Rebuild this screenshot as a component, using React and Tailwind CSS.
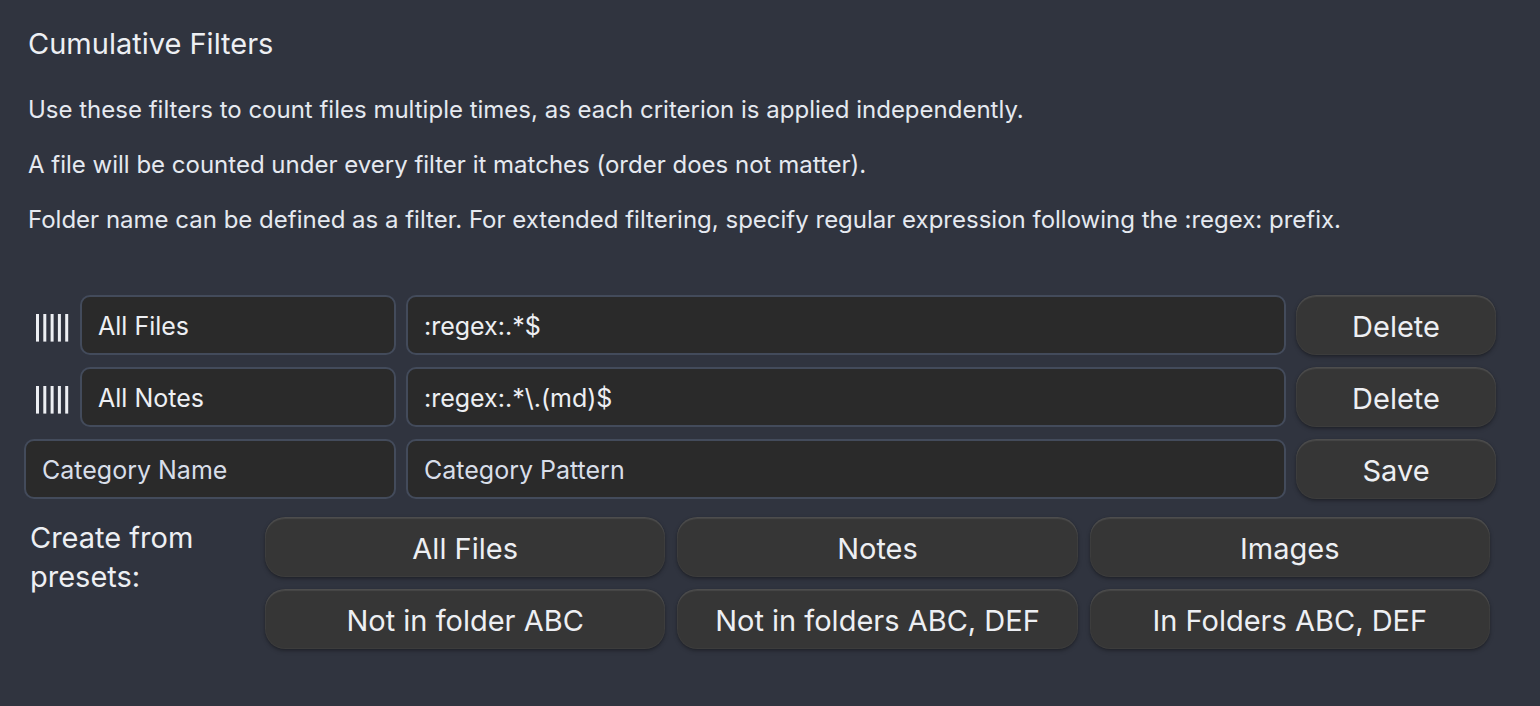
const filters = [
  { id: "all-files", name: "All Files", pattern: ":regex:.*$" },
  { id: "all-notes", name: "All Notes", pattern: ":regex:.*\\.(md)$" },
];

const presets = [
  "All Files",
  "Notes",
  "Images",
  "Not in folder ABC",
  "Not in folders ABC, DEF",
  "In Folders ABC, DEF",
];

function Button({ children, className = "" }) {
  return (
    <button
      type="button"
      className={`h-15 cursor-pointer rounded-[20px] bg-[#363636] px-4 pt-1 text-[29px] whitespace-nowrap text-[#edeff3] shadow-[inset_0_2px_1px_0_rgba(255,255,255,0.09),inset_0_0_0_1px_rgba(255,255,255,0.03),0_2px_4px_0_rgba(0,0,0,0.25),0_1px_2px_0_rgba(0,0,0,0.15)] ${className}`}
    >
      {children}
    </button>
  );
}

function TextField({ label, className = "", ...props }) {
  return (
    <input
      type="text"
      aria-label={label}
      className={`h-15 min-w-0 rounded-[10px] border-2 border-[#434b5b] bg-[#2a2a2a] px-4 pt-0.5 text-[25px] text-[#edeff3] outline-none placeholder:text-[#d8dee9] ${className}`}
      {...props}
    />
  );
}

function DragHandle() {
  return (
    <button type="button" aria-label="Reorder filter" className="w-14 shrink-0 cursor-grab pt-1.5 pl-2.5">
      <svg width="36" height="28" viewBox="0 0 36 28" fill="#edeff3" aria-hidden="true">
        <rect x="2" width="3" height="27.6" />
        <rect x="9.3" width="3" height="27.6" />
        <rect x="16.6" width="3" height="27.6" />
        <rect x="23.9" width="3" height="27.6" />
        <rect x="31.2" width="3" height="27.6" />
      </svg>
    </button>
  );
}

export default function App() {
  return (
    <main className="min-h-screen bg-[#30343f] pt-6 pr-11 pb-14 pl-6 font-['Inter','Liberation_Sans',sans-serif] text-[#edeff3]">
      <header className="pl-1">
        <h2 className="text-[29px] leading-10">Cumulative Filters</h2>
        <div className="mt-7 flex flex-col gap-[19px] text-[24px] leading-9 text-[#e5e9f0]">
          <p>Use these filters to count files multiple times, as each criterion is applied independently.</p>
          <p>A file will be counted under every filter it matches (order does not matter).</p>
          <p>Folder name can be defined as a filter. For extended filtering, specify regular expression following the :regex: prefix.</p>
        </div>
      </header>

      <section className="mt-[57px] flex flex-col gap-3">
        {filters.map((filter) => (
          <div key={filter.id} className="flex gap-2.5">
            <div className="flex w-[372px] shrink-0 items-center">
              <DragHandle />
              <TextField label="Category name" defaultValue={filter.name} className="flex-1" />
            </div>
            <TextField label="Category pattern" defaultValue={filter.pattern} className="flex-1" />
            <Button className="w-50 shrink-0">Delete</Button>
          </div>
        ))}
        <div className="flex gap-2.5">
          <TextField label="New category name" placeholder="Category Name" className="w-[372px] shrink-0" />
          <TextField label="New category pattern" placeholder="Category Pattern" className="flex-1" />
          <Button className="w-50 shrink-0">Save</Button>
        </div>
      </section>

      <section className="mt-[18px] flex pr-1.5 pl-1.5">
        <p className="w-[235px] shrink-0 pt-px pr-12 text-[29px] leading-[39px]">Create from presets:</p>
        <div className="grid flex-1 grid-cols-3 gap-3">
          {presets.map((preset) => (
            <Button key={preset}>{preset}</Button>
          ))}
        </div>
      </section>
    </main>
  );
}
